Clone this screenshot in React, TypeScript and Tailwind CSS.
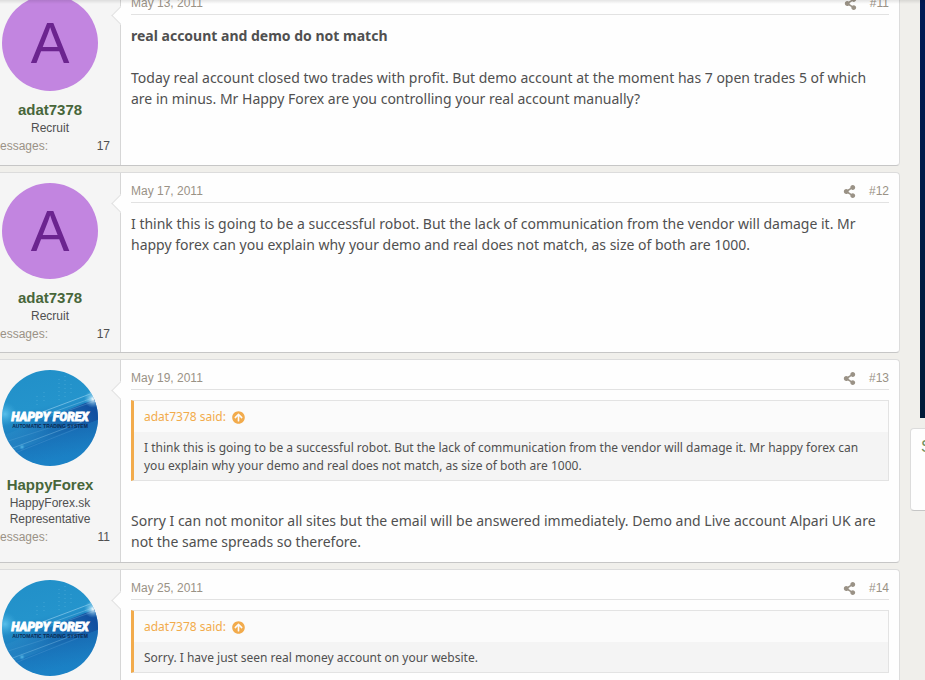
import type { ReactNode } from "react";
import { FaArrowCircleUp, FaShareAlt } from "react-icons/fa";

const messageFont = "font-['Noto_Sans','Open_Sans',sans-serif]";

type Member = {
  name: string;
  title: string;
  messages: number;
  avatar: ReactNode;
};

type PostProps = {
  member: Member;
  date: string;
  number: number;
  children: ReactNode;
};

function LetterAvatar() {
  return (
    <div className="flex size-24 items-center justify-center rounded-full bg-[#c285e0] text-[58px] leading-none text-[#6b248f]">
      A
    </div>
  );
}

function LogoAvatar() {
  return (
    <svg viewBox="0 0 96 96" className="block size-24" role="img" aria-label="HappyForex">
      <defs>
        <linearGradient id="sky" x1="0" y1="0" x2="0.25" y2="1">
          <stop offset="0" stopColor="#218fc8" />
          <stop offset="0.45" stopColor="#2494cc" />
          <stop offset="0.75" stopColor="#1b78bc" />
          <stop offset="1" stopColor="#1b82c6" />
        </linearGradient>
        <linearGradient id="beam" x1="0" y1="0.7" x2="1" y2="0.3">
          <stop offset="0" stopColor="#3ba0d6" stopOpacity="0.2" />
          <stop offset="0.5" stopColor="#1767ae" stopOpacity="0.6" />
          <stop offset="1" stopColor="#124f9f" />
        </linearGradient>
        <linearGradient id="shade" x1="0.3" y1="0" x2="0.55" y2="1">
          <stop offset="0" stopColor="#1560ac" stopOpacity="0.9" />
          <stop offset="1" stopColor="#1a7cc2" stopOpacity="0" />
        </linearGradient>
        <radialGradient id="flare">
          <stop offset="0" stopColor="#ffffff" />
          <stop offset="0.3" stopColor="#b9e4f8" stopOpacity="0.7" />
          <stop offset="1" stopColor="#6cc7f0" stopOpacity="0" />
        </radialGradient>
        <radialGradient id="glow">
          <stop offset="0" stopColor="#7ddcff" stopOpacity="0.6" />
          <stop offset="1" stopColor="#4db8e8" stopOpacity="0" />
        </radialGradient>
        <clipPath id="disc">
          <circle cx="48" cy="48" r="48" />
        </clipPath>
      </defs>
      <g clipPath="url(#disc)">
        <rect width="96" height="96" fill="url(#sky)" />
        <path d="M0 66 L96 28 L96 50 L0 86 Z" fill="url(#beam)" />
        <path d="M0 86 L96 50 L96 96 L0 96 Z" fill="url(#shade)" />
        <g stroke="#a5daf5" fill="none">
          <path d="M35 44 L96 21" strokeWidth="0.8" strokeOpacity="0.7" />
          <path d="M46 44 L96 26" strokeWidth="0.6" strokeOpacity="0.6" />
          <path d="M62 42 L96 30" strokeWidth="0.6" strokeOpacity="0.4" />
          <path d="M0 82 L80 52" strokeWidth="0.8" strokeOpacity="0.4" />
          <path d="M8 85 L76 58" strokeWidth="0.5" strokeOpacity="0.3" />
          <path d="M0 73 L50 57" strokeWidth="0.6" strokeOpacity="0.25" />
        </g>
        <g stroke="#8bd0ef" strokeOpacity="0.3" strokeDasharray="1 3">
          <path d="M57 9 V32" />
          <path d="M63 6 V28" />
          <path d="M69 14 V26" />
          <path d="M35 26 V38" />
          <path d="M42 22 V34" />
        </g>
        <circle cx="91" cy="29" r="9" fill="url(#flare)" />
        <circle cx="3" cy="44" r="12" fill="url(#glow)" />
        <circle cx="20" cy="77" r="3" fill="url(#glow)" />
        <text x="48" y="51" textAnchor="middle" className="fill-white stroke-white font-['Roboto',sans-serif] text-[12px] font-black italic" strokeWidth="0.8">
          HAPPY FOREX
        </text>
        <text x="48" y="58" textAnchor="middle" className="fill-[#0b2850] font-['Liberation_Sans',Arial,sans-serif] text-[5px] font-bold">
          AUTOMATIC TRADING SYSTEM
        </text>
      </g>
    </svg>
  );
}

const adat: Member = { name: "adat7378", title: "Recruit", messages: 17, avatar: <LetterAvatar /> };
const happy: Member = {
  name: "HappyForex",
  title: "HappyForex.sk Representative",
  messages: 11,
  avatar: <LogoAvatar />,
};

function Post({ member, date, number, children }: PostProps) {
  return (
    <article className="flex rounded border border-[#dcdcdc] border-b-[#c6c6c6] bg-[#fefefe]">
      <section className="relative w-[141px] shrink-0 border-r border-[#d6d6d6] bg-[#f5f5f5] p-2.5 text-xs leading-4">
        <div className="flex justify-center">{member.avatar}</div>
        <h4 className="mt-2.5 text-center text-[15px] leading-[17px] font-bold">
          <a href="#member" className="text-[#47663a]">{member.name}</a>
        </h4>
        <h5 className="mt-0.5 px-4 text-center text-[#505050]">{member.title}</h5>
        <dl className="mt-0.5 flex justify-between">
          <dt className="text-[#9a9286]">Messages:</dt>
          <dd className="text-[#505050]">{member.messages}</dd>
        </dl>
        <span className="absolute top-6 -right-[7px] size-[13px] rotate-45 border-b border-l border-[#e0e0e0] bg-[#fefefe]" />
      </section>
      <div className="min-w-0 flex-1 p-2.5">
        <header className="flex items-center justify-between border-b border-[#e2e2e2] pb-[3px] text-xs leading-4 text-[#9a9286]">
          <a href="#post"><time>{date}</time></a>
          <div className="flex items-center gap-[13px]">
            <button type="button" aria-label="Share"><FaShareAlt size={13} /></button>
            <a href="#post">#{number}</a>
          </div>
        </header>
        <div className={`mt-2.5 text-sm leading-[21px] text-[#505050] ${messageFont}`}>{children}</div>
      </div>
    </article>
  );
}

function Quote({ children }: { children: ReactNode }) {
  return (
    <blockquote className="border border-l-3 border-[#e3e3e3] border-l-[#f2ab4c] bg-[#f4f4f4] text-xs leading-[18px]">
      <a href="#quoted" className="flex items-center gap-1.5 bg-[#fbfbfb] px-2.5 pt-[7px] pb-1.5 text-[#f2ab4c]">
        adat7378 said: <FaArrowCircleUp size={13} />
      </a>
      <p className="px-2.5 pt-[7px] pb-[5px]">{children}</p>
    </blockquote>
  );
}

export default function App() {
  return (
    <div className="relative flex h-screen overflow-hidden bg-[#f0efeb] font-['Liberation_Sans',Arial,sans-serif]">
      <main className="-mt-4 -ml-[21px] flex min-w-0 flex-1 flex-col gap-1.5">
        <div className="flex min-h-[182px] shrink-0 flex-col *:flex-1">
          <Post member={adat} date="May 13, 2011" number={11}>
            <p className="font-bold">real account and demo do not match</p>
            <p className="mt-[21px]">
              Today real account closed two trades with profit. But demo account at the moment has 7 open trades 5 of which
              are in minus. Mr Happy Forex are you controlling your real account manually?
            </p>
          </Post>
        </div>
        <Post member={adat} date="May 17, 2011" number={12}>
          <p>
            I think this is going to be a successful robot. But the lack of communication from the vendor will damage it. Mr
            happy forex can you explain why your demo and real does not match, as size of both are 1000.
          </p>
        </Post>
        <Post member={happy} date="May 19, 2011" number={13}>
          <Quote>
            I think this is going to be a successful robot. But the lack of communication from the vendor will damage it. Mr
            happy forex can you explain why your demo and real does not match, as size of both are 1000.
          </Quote>
          <p className="mt-[29px]">
            Sorry I can not monitor all sites but the email will be answered immediately. Demo and Live account Alpari UK are
            not the same spreads so therefore.
          </p>
        </Post>
        <Post member={happy} date="May 25, 2011" number={14}>
          <Quote>Sorry. I have just seen real money account on your website.</Quote>
        </Post>
      </main>
      <aside className="ml-2.5 w-[15px] shrink-0 overflow-hidden">
        <div className="ml-2.5 h-[418px] w-[300px] bg-linear-to-b from-[#001a55] to-[#001b38]" />
        <div className="mt-2.5 h-[83px] w-[300px] rounded border border-[#dcdcdc] border-b-[#c6c6c6] bg-[#fefefe] px-2.5 py-2">
          <h3 className="text-base leading-5 text-[#6f8f5c]">S</h3>
        </div>
      </aside>
      <div className="pointer-events-none absolute inset-x-0 top-0 h-1 bg-linear-to-b from-black/10 to-transparent" />
    </div>
  );
}
